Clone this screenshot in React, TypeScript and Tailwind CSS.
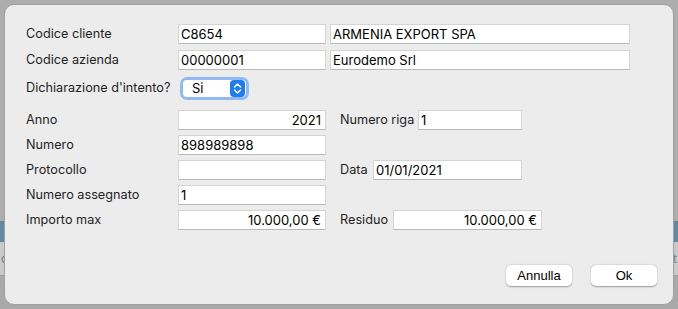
// Dichiarazione d'intento sheet

import React from 'react';

const font = "font-['Inter','Liberation_Sans',sans-serif]";

const Field: React.FC<{ value?: string; w: string; right?: boolean }> = ({ value = '', w, right }) => (
  <div
    className={`${w} h-[20px] bg-white border border-[#d4d4d4] border-b-[#b9b9b9] flex items-center text-[13px] text-black leading-none ${right ? 'justify-end pr-[4px]' : 'pl-[2px]'}`}
  >
    {value}
  </div>
);

const Label: React.FC<{ text: string; w: string }> = ({ text, w }) => (
  <div className={`${w} text-[12.7px] text-[#1f1f1f] leading-none`}>{text}</div>
);

const PopupChevron: React.FC = () => (
  <div className="w-[15px] h-[17px] rounded-[4px] bg-[#1c7cf4] flex items-center justify-center">
    <svg width="9" height="13" viewBox="0 0 9 13" fill="none" stroke="white" strokeWidth="1.6" strokeLinecap="round" strokeLinejoin="round">
      <path d="M1.5 5 L4.5 2 L7.5 5" />
      <path d="M1.5 8 L4.5 11 L7.5 8" />
    </svg>
  </div>
);

const MacButton: React.FC<{ text: string }> = ({ text }) => (
  <div className="w-[66px] h-[21px] bg-white rounded-[5px] shadow-[0_0.5px_1.5px_rgba(0,0,0,0.35)] flex items-center justify-center text-[13px] text-black font-['Liberation_Sans',sans-serif] leading-none">
    {text}
  </div>
);

export default function App() {
  return (
    <div className={`relative w-[678px] h-[309px] overflow-hidden bg-[#b1b1b1] ${font}`}>
      {/* app behind the sheet */}
      <div className="flex flex-col h-full">
        <div className="h-[221px] bg-[#adadad]" />
        <div className="h-[21px] bg-[#5f8aa0]" />
        <div className="h-[34px] bg-[#c9c9c9] border-b border-[#9d9d9d] flex items-center justify-between text-[13px] text-[#7a7a7a]">
          <span className="pl-[1px] text-[12px]">o</span>
          <span className="pr-[1px] text-[12px]">t</span>
        </div>
        <div className="flex-1 bg-[#a9a9a9]" />
      </div>

      {/* sheet */}
      <div className="absolute left-[4px] top-[4px] w-[670px] h-[301px] rounded-[10px] bg-[#ececec] border border-[#a0a0a0] flex flex-col pl-[21px] pt-[19px]">
        <div className="flex items-center h-[20px]">
          <Label text="Codice cliente" w="w-[152px]" />
          <Field value="C8654" w="w-[148px]" />
          <div className="w-[4px]" />
          <Field value="ARMENIA EXPORT SPA" w="w-[300px]" />
        </div>
        <div className="flex items-center h-[20px] mt-[6px]">
          <Label text="Codice azienda" w="w-[152px]" />
          <Field value="00000001" w="w-[148px]" />
          <div className="w-[4px]" />
          <Field value="Eurodemo Srl" w="w-[300px]" />
        </div>
        <div className="flex items-center h-[23px] mt-[7px]">
          <Label text="Dichiarazione d'intento?" w="w-[154px]" />
          <div className="w-[69px] h-[23px] rounded-[7px] bg-[#93b9f2] p-[3px]">
            <div className="w-full h-full rounded-[4px] bg-white flex items-center justify-between pl-[9px] pr-[1px] text-[13px] text-black leading-none">
              <span>Si</span>
              <PopupChevron />
            </div>
          </div>
        </div>
        <div className="flex items-center h-[20px] mt-[10px]">
          <Label text="Anno" w="w-[152px]" />
          <Field value="2021" w="w-[148px]" right />
          <div className="w-[14px]" />
          <Label text="Numero riga" w="w-[78px]" />
          <Field value="1" w="w-[104px]" />
        </div>
        <div className="flex items-center h-[20px] mt-[5px]">
          <Label text="Numero" w="w-[152px]" />
          <Field value="898989898" w="w-[148px]" />
        </div>
        <div className="flex items-center h-[20px] mt-[5px]">
          <Label text="Protocollo" w="w-[152px]" />
          <Field w="w-[148px]" />
          <div className="w-[14px]" />
          <Label text="Data" w="w-[33px]" />
          <Field value="01/01/2021" w="w-[149px]" />
        </div>
        <div className="flex items-center h-[20px] mt-[5px]">
          <Label text="Numero assegnato" w="w-[152px]" />
          <Field value="1" w="w-[148px]" />
        </div>
        <div className="flex items-center h-[20px] mt-[5px]">
          <Label text="Importo max" w="w-[152px]" />
          <Field value="10.000,00 €" w="w-[148px]" right />
          <div className="w-[14px]" />
          <Label text="Residuo" w="w-[53px]" />
          <Field value="10.000,00 €" w="w-[149px]" right />
        </div>
        <div className="flex justify-end gap-[19px] mt-[35px] pr-[16px]">
          <MacButton text="Annulla" />
          <MacButton text="Ok" />
        </div>
      </div>
    </div>
  );
}
